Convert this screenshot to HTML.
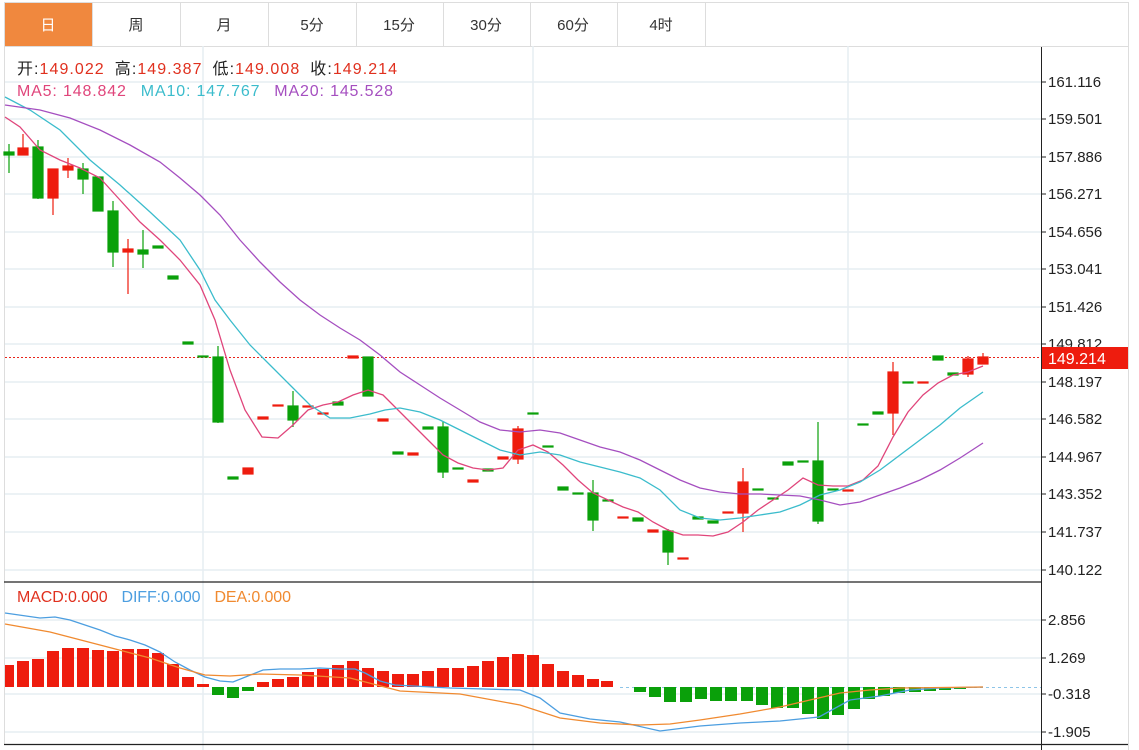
<!DOCTYPE html>
<html><head><meta charset="utf-8"><style>
html,body{margin:0;padding:0;background:#fff;width:1139px;height:750px;overflow:hidden;font-family:"Liberation Sans","Noto Sans CJK SC",sans-serif;}
svg{position:absolute;left:0;top:0}
</style></head><body>
<svg width="1139" height="750" viewBox="0 0 1139 750" xmlns="http://www.w3.org/2000/svg" font-family="Liberation Sans, Noto Sans CJK SC, sans-serif">
<rect x="4.5" y="2.5" width="1124" height="44" fill="#fff" stroke="#ddd"/>
<rect x="5" y="3" width="87" height="43" fill="#f0883e"/>
<g stroke="#ddd"><line x1="92.5" y1="3" x2="92.5" y2="46"/><line x1="180.5" y1="3" x2="180.5" y2="46"/><line x1="268.5" y1="3" x2="268.5" y2="46"/><line x1="356.5" y1="3" x2="356.5" y2="46"/><line x1="443.5" y1="3" x2="443.5" y2="46"/><line x1="530.5" y1="3" x2="530.5" y2="46"/><line x1="617.5" y1="3" x2="617.5" y2="46"/><line x1="705.5" y1="3" x2="705.5" y2="46"/>
<line x1="1128.5" y1="46" x2="1128.5" y2="750"/><line x1="4.5" y1="46" x2="4.5" y2="745"/></g>
<g font-size="15" fill="#333" text-anchor="middle"><text x="48" y="30" fill="#fff">日</text><text x="136" y="30">周</text><text x="224" y="30">月</text><text x="312" y="30">5分</text><text x="399" y="30">15分</text><text x="486" y="30">30分</text><text x="573" y="30">60分</text><text x="661" y="30">4时</text></g>
<g stroke="#e6edf2" stroke-width="1.5">
<line x1="5" y1="82" x2="1041" y2="82"/><line x1="5" y1="119" x2="1041" y2="119"/><line x1="5" y1="157" x2="1041" y2="157"/><line x1="5" y1="194" x2="1041" y2="194"/><line x1="5" y1="232" x2="1041" y2="232"/><line x1="5" y1="269" x2="1041" y2="269"/><line x1="5" y1="307" x2="1041" y2="307"/><line x1="5" y1="344" x2="1041" y2="344"/><line x1="5" y1="382" x2="1041" y2="382"/><line x1="5" y1="419" x2="1041" y2="419"/><line x1="5" y1="457" x2="1041" y2="457"/><line x1="5" y1="494" x2="1041" y2="494"/><line x1="5" y1="532" x2="1041" y2="532"/><line x1="5" y1="570" x2="1041" y2="570"/>
<line x1="5" y1="620" x2="1041" y2="620"/><line x1="5" y1="658" x2="1041" y2="658"/><line x1="5" y1="694" x2="1041" y2="694"/><line x1="5" y1="732" x2="1041" y2="732"/>
<line x1="203" y1="46" x2="203" y2="750"/><line x1="533" y1="46" x2="533" y2="750"/><line x1="848" y1="46" x2="848" y2="750"/>
</g>
<line x1="4" y1="582" x2="1041" y2="582" stroke="#222" stroke-width="1.2"/>
<line x1="4" y1="744.5" x2="1128" y2="744.5" stroke="#222" stroke-width="1.2"/>
<line x1="1041.5" y1="47" x2="1041.5" y2="750" stroke="#222"/>
<g stroke="#222"><line x1="1041" y1="82" x2="1046" y2="82"/><line x1="1041" y1="119" x2="1046" y2="119"/><line x1="1041" y1="157" x2="1046" y2="157"/><line x1="1041" y1="194" x2="1046" y2="194"/><line x1="1041" y1="232" x2="1046" y2="232"/><line x1="1041" y1="269" x2="1046" y2="269"/><line x1="1041" y1="307" x2="1046" y2="307"/><line x1="1041" y1="344" x2="1046" y2="344"/><line x1="1041" y1="382" x2="1046" y2="382"/><line x1="1041" y1="419" x2="1046" y2="419"/><line x1="1041" y1="457" x2="1046" y2="457"/><line x1="1041" y1="494" x2="1046" y2="494"/><line x1="1041" y1="532" x2="1046" y2="532"/><line x1="1041" y1="570" x2="1046" y2="570"/><line x1="1041" y1="620" x2="1046" y2="620"/><line x1="1041" y1="658" x2="1046" y2="658"/><line x1="1041" y1="694" x2="1046" y2="694"/><line x1="1041" y1="732" x2="1046" y2="732"/></g>
<g font-size="15" fill="#222"><text x="1048" y="87">161.116</text><text x="1048" y="124">159.501</text><text x="1048" y="162">157.886</text><text x="1048" y="199">156.271</text><text x="1048" y="237">154.656</text><text x="1048" y="274">153.041</text><text x="1048" y="312">151.426</text><text x="1048" y="349">149.812</text><text x="1048" y="387">148.197</text><text x="1048" y="424">146.582</text><text x="1048" y="462">144.967</text><text x="1048" y="499">143.352</text><text x="1048" y="537">141.737</text><text x="1048" y="575">140.122</text>
<text x="1048" y="625">2.856</text><text x="1048" y="663">1.269</text><text x="1048" y="699">-0.318</text><text x="1048" y="737">-1.905</text></g>
<line x1="5" y1="357.5" x2="1041" y2="357.5" stroke="#e8231a" stroke-dasharray="2,2"/>
<rect x="1042" y="347" width="86" height="22" fill="#ee1c0e"/>
<text x="1048" y="364" font-size="16" fill="#fff">149.214</text>
<g font-size="16">
<text x="17" y="74" textLength="380" lengthAdjust="spacing"><tspan fill="#222">开:</tspan><tspan fill="#e0301e">149.022</tspan><tspan fill="#222" dx="10">高:</tspan><tspan fill="#e0301e">149.387</tspan><tspan fill="#222" dx="10">低:</tspan><tspan fill="#e0301e">149.008</tspan><tspan fill="#222" dx="10">收:</tspan><tspan fill="#e0301e">149.214</tspan></text>
<text x="17" y="96" textLength="376" lengthAdjust="spacing"><tspan fill="#e0457b">MA5: 148.842</tspan><tspan fill="#3bbccc" dx="14">MA10: 147.767</tspan><tspan fill="#a54fc0" dx="14">MA20: 145.528</tspan></text>
<text x="17" y="602" textLength="274" lengthAdjust="spacing"><tspan fill="#e0301e">MACD:0.000</tspan><tspan fill="#4c9ee0" dx="14">DIFF:0.000</tspan><tspan fill="#f08a30" dx="14">DEA:0.000</tspan></text></g>
<g stroke-width="1.2">
<g fill="#0aa00a" stroke="#0aa00a">
<line x1="9" y1="144" x2="9" y2="173"/><rect x="4" y="152" width="10" height="3"/>
<line x1="38" y1="140" x2="38" y2="199"/><rect x="33" y="147" width="10" height="51"/>
<line x1="83" y1="163" x2="83" y2="194"/><rect x="78" y="169" width="10" height="10"/>
<rect x="93" y="177" width="10" height="34"/>
<line x1="113" y1="201" x2="113" y2="267"/><rect x="108" y="211" width="10" height="41"/>
<line x1="143" y1="230" x2="143" y2="268"/><rect x="138" y="250" width="10" height="4"/>
<rect x="153" y="246" width="10" height="2"/><rect x="168" y="276" width="10" height="3"/><rect x="183" y="342" width="10" height="2"/><rect x="198" y="356" width="10" height="1"/>
<line x1="218" y1="346" x2="218" y2="423"/><rect x="213" y="357" width="10" height="65"/>
<rect x="228" y="477" width="10" height="2"/>
<line x1="293" y1="391" x2="293" y2="427"/><rect x="288" y="406" width="10" height="14"/>
<rect x="333" y="402" width="10" height="3"/>
<rect x="363" y="357" width="10" height="39"/>
<rect x="393" y="452" width="10" height="2"/><rect x="423" y="427" width="10" height="2"/>
<line x1="443" y1="422" x2="443" y2="478"/><rect x="438" y="427" width="10" height="45"/>
<rect x="453" y="468" width="10" height="1"/><rect x="483" y="469" width="10" height="2"/>
<rect x="528" y="413" width="10" height="1"/><rect x="543" y="446" width="10" height="1"/>
<rect x="558" y="487" width="10" height="3"/><rect x="573" y="493" width="10" height="1"/>
<line x1="593" y1="480" x2="593" y2="531"/><rect x="588" y="493" width="10" height="27"/>
<rect x="603" y="500" width="10" height="1"/><rect x="633" y="518" width="10" height="3"/>
<line x1="668" y1="529" x2="668" y2="565"/><rect x="663" y="531" width="10" height="21"/>
<rect x="693" y="517" width="10" height="2"/><rect x="708" y="521" width="10" height="2"/>
<rect x="753" y="489" width="10" height="1"/><rect x="768" y="498" width="10" height="1"/>
<rect x="783" y="462" width="10" height="3"/><rect x="798" y="461" width="10" height="1"/>
<line x1="818" y1="422" x2="818" y2="524"/><rect x="813" y="461" width="10" height="60"/>
<rect x="828" y="489" width="10" height="1"/><rect x="858" y="424" width="10" height="1"/><rect x="873" y="412" width="10" height="2"/>
<rect x="903" y="382" width="10" height="1"/><rect x="933" y="356" width="10" height="4"/><rect x="948" y="373" width="10" height="2"/>
</g>
<g fill="#ee1c0e" stroke="#ee1c0e">
<line x1="23" y1="134" x2="23" y2="155"/><rect x="18" y="148" width="10" height="7"/>
<line x1="53" y1="169" x2="53" y2="215"/><rect x="48" y="169" width="10" height="29"/>
<line x1="68" y1="158" x2="68" y2="178"/><rect x="63" y="166" width="10" height="4"/>
<line x1="128" y1="239" x2="128" y2="294"/><rect x="123" y="249" width="10" height="3"/>
<rect x="243" y="468" width="10" height="6"/><rect x="258" y="417" width="10" height="2"/><rect x="273" y="405" width="10" height="1"/>
<rect x="303" y="406" width="10" height="1"/><rect x="318" y="413" width="10" height="1"/><rect x="348" y="356" width="10" height="2"/><rect x="378" y="419" width="10" height="2"/>
<rect x="408" y="453" width="10" height="2"/><rect x="468" y="480" width="10" height="2"/><rect x="498" y="457" width="10" height="2"/>
<line x1="518" y1="426" x2="518" y2="464"/><rect x="513" y="429" width="10" height="30"/>
<rect x="618" y="517" width="10" height="1"/><rect x="648" y="530" width="10" height="2"/><rect x="678" y="558" width="10" height="1"/>
<rect x="723" y="512" width="10" height="1"/>
<line x1="743" y1="468" x2="743" y2="532"/><rect x="738" y="482" width="10" height="31"/>
<rect x="843" y="490" width="10" height="1"/>
<line x1="893" y1="362" x2="893" y2="435"/><rect x="888" y="372" width="10" height="41"/>
<rect x="918" y="382" width="10" height="1"/>
<line x1="968" y1="356" x2="968" y2="377"/><rect x="963" y="359" width="10" height="15"/>
<line x1="983" y1="353" x2="983" y2="364"/><rect x="978" y="357" width="10" height="7"/>
</g></g>
<g fill="none" stroke-width="1.3">
<polyline stroke="#e0457b" points="5,117 20,127 40,150 60,160 80,168 100,178 120,200 140,222 160,240 180,260 200,285 215,320 230,370 245,410 262,437 278,438 293,425 308,410 323,405 338,402 353,395 368,390 383,395 398,410 413,425 428,440 443,455 458,463 473,468 488,470 503,468 518,450 533,445 548,452 563,465 578,480 593,493 608,500 623,507 638,512 653,522 668,530 683,535 698,535 713,536 728,532 743,522 758,510 773,500 788,490 803,478 818,485 833,486 848,486 863,480 878,466 893,437 908,412 923,395 938,383 953,375 968,372 983,366"/>
<polyline stroke="#3bbccc" points="5,97 30,110 60,130 90,160 120,185 150,212 180,240 200,270 215,300 230,320 250,345 270,365 290,385 310,405 330,418 350,418 370,414 385,410 400,408 420,412 440,420 460,430 480,440 500,450 520,455 540,452 560,455 580,462 600,467 620,472 640,478 660,490 680,510 700,518 720,520 740,518 760,515 780,512 800,505 820,495 840,490 860,482 880,470 900,455 920,440 940,425 960,408 983,392"/>
<polyline stroke="#a54fc0" points="5,105 40,110 70,118 100,130 130,145 160,162 180,178 200,195 220,215 240,240 260,262 280,282 300,300 320,315 340,328 360,340 380,355 400,372 420,385 440,398 460,410 480,422 500,430 520,432 540,430 560,433 580,440 600,447 620,452 640,460 660,470 680,480 700,488 720,492 740,494 760,494 780,495 800,496 820,500 840,505 860,502 880,495 900,488 920,480 940,470 960,458 983,443"/>
</g>
<line x1="620" y1="687.5" x2="1041" y2="687.5" stroke="#8ec5e8" stroke-dasharray="3,3"/>
<g fill="#ee1c0e">
<rect x="5" y="665" width="9" height="22"/><rect x="17" y="661" width="12" height="26"/><rect x="32" y="659" width="12" height="28"/><rect x="47" y="651" width="12" height="36"/><rect x="62" y="648" width="12" height="39"/><rect x="77" y="648" width="12" height="39"/><rect x="92" y="650" width="12" height="37"/><rect x="107" y="651" width="12" height="36"/><rect x="122" y="649" width="12" height="38"/><rect x="137" y="649" width="12" height="38"/><rect x="152" y="653" width="12" height="34"/><rect x="167" y="664" width="12" height="23"/><rect x="182" y="677" width="12" height="10"/><rect x="197" y="684" width="12" height="3"/>
<rect x="257" y="682" width="12" height="5"/><rect x="272" y="679" width="12" height="8"/><rect x="287" y="677" width="12" height="10"/><rect x="302" y="672" width="12" height="15"/><rect x="317" y="669" width="12" height="18"/><rect x="332" y="665" width="12" height="22"/><rect x="347" y="661" width="12" height="26"/><rect x="362" y="668" width="12" height="19"/><rect x="377" y="671" width="12" height="16"/><rect x="392" y="674" width="12" height="13"/><rect x="407" y="674" width="12" height="13"/><rect x="422" y="671" width="12" height="16"/><rect x="437" y="668" width="12" height="19"/><rect x="452" y="668" width="12" height="19"/><rect x="467" y="666" width="12" height="21"/><rect x="482" y="661" width="12" height="26"/><rect x="497" y="657" width="12" height="30"/><rect x="512" y="654" width="12" height="33"/><rect x="527" y="655" width="12" height="32"/><rect x="542" y="664" width="12" height="23"/><rect x="557" y="671" width="12" height="16"/><rect x="572" y="675" width="12" height="12"/><rect x="587" y="679" width="12" height="8"/><rect x="601" y="681" width="12" height="6"/>
</g>
<g fill="#0aa00a">
<rect x="212" y="687" width="12" height="8"/><rect x="227" y="687" width="12" height="11"/><rect x="242" y="687" width="12" height="4"/>
<rect x="634" y="687" width="12" height="5"/><rect x="649" y="687" width="12" height="10"/><rect x="664" y="687" width="12" height="15"/><rect x="680" y="687" width="12" height="15"/><rect x="695" y="687" width="12" height="12"/><rect x="710" y="687" width="12" height="14"/><rect x="725" y="687" width="12" height="14"/><rect x="741" y="687" width="12" height="14"/><rect x="756" y="687" width="12" height="18"/><rect x="771" y="687" width="12" height="21"/><rect x="787" y="687" width="12" height="21"/><rect x="802" y="687" width="12" height="27"/><rect x="817" y="687" width="12" height="32"/><rect x="832" y="687" width="12" height="28"/><rect x="848" y="687" width="12" height="22"/><rect x="863" y="687" width="12" height="12"/><rect x="878" y="687" width="12" height="9"/><rect x="893" y="687" width="12" height="6"/><rect x="909" y="687" width="12" height="5"/><rect x="924" y="687" width="12" height="4"/><rect x="939" y="687" width="12" height="3"/><rect x="954" y="687" width="12" height="2"/>
</g>
<g fill="none" stroke-width="1.3">
<polyline stroke="#4c9ee0" points="5,613 40,618 55,617 70,620 100,630 115,636 130,640 145,645 160,652 175,662 190,670 205,677 220,681 233,682 248,676 263,670 280,669 300,669 320,668 340,669 355,669 365,673 380,681 395,685 450,688 520,690 540,698 560,713 590,719 620,722 660,731 700,726 740,723 780,721 819,717 850,700 880,696 910,690 940,688 983,687"/>
<polyline stroke="#f08a30" points="5,624 50,632 100,645 150,658 180,668 205,675 230,676 260,674 300,675 350,678 400,691 460,694 520,705 560,718 600,723 640,725 670,724 700,720 740,714 780,707 810,700 840,693 870,690 900,688 983,687"/>
</g>
</svg>
</body></html>
